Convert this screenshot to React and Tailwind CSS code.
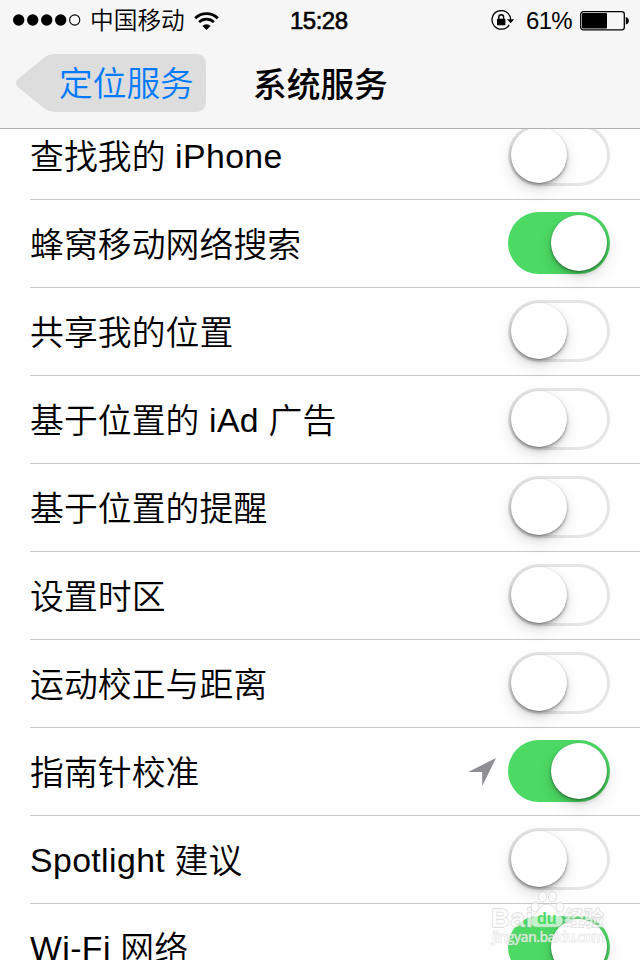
import React, { useState } from 'react';

const initialServices = [
    { id: 'find', label: '查找我的 iPhone', on: false },
    { id: 'cell', label: '蜂窝移动网络搜索', on: true },
    { id: 'share', label: '共享我的位置', on: false },
    { id: 'iad', label: '基于位置的 iAd 广告', on: false },
    { id: 'remind', label: '基于位置的提醒', on: false },
    { id: 'timezone', label: '设置时区', on: false },
    { id: 'motion', label: '运动校正与距离', on: false },
    { id: 'compass', label: '指南针校准', on: true, recent: true },
    { id: 'spotlight', label: 'Spotlight 建议', on: false },
    { id: 'wifi', label: 'Wi-Fi 网络', on: true },
];

const SignalDots = () => (
    <svg width="68" height="12" viewBox="0 0 68 12">
        <circle cx="5.7" cy="6" r="5.7" />
        <circle cx="19.7" cy="6" r="5.7" />
        <circle cx="33.7" cy="6" r="5.7" />
        <circle cx="47.7" cy="6" r="5.7" />
        <circle cx="61.7" cy="6" r="5.1" fill="none" stroke="#000" strokeWidth="1.1" />
    </svg>
);

const WifiIcon = () => (
    <svg width="25" height="18" viewBox="0 0 25 18">
        <path d="M1.2 6.2 A16 16 0 0 1 23.8 6.2" fill="none" stroke="#000" strokeWidth="2.8" />
        <path d="M5.1 10.2 A10.5 10.5 0 0 1 19.9 10.2" fill="none" stroke="#000" strokeWidth="2.6" />
        <path d="M12.5 18 L8.4 13.9 A5.8 5.8 0 0 1 16.6 13.9 Z" />
    </svg>
);

const RotationLock = () => (
    <svg width="24" height="21" viewBox="0 0 24 21">
        <path d="M18.2 14.8 A9.3 9.3 0 1 1 19.6 9.4" fill="none" stroke="#000" strokeWidth="1.3" />
        <path d="M16 9.2 H23.2 L19.6 13.2 Z" />
        <rect x="6" y="8.8" width="8.4" height="6.4" rx="0.6" />
        <path d="M7.8 9 V7.2 A2.4 2.4 0 0 1 12.6 7.2 V9" fill="none" stroke="#000" strokeWidth="1.4" />
    </svg>
);

const Battery = () => (
    <svg width="50" height="20" viewBox="0 0 50 20">
        <rect x="0.7" y="0.7" width="43.6" height="18.2" rx="2.6" fill="none" stroke="#000" strokeWidth="1.3" />
        <rect x="2" y="2" width="25" height="15.6" rx="0.8" />
        <path d="M45.8 6 C49.9 7 49.9 12.6 45.8 13.6 Z" />
    </svg>
);

const Toggle = ({ on, onChange }) => (
    <button
        role="switch"
        aria-checked={on}
        onClick={onChange}
        className={`mb-px flex h-[62px] w-[102px] shrink-0 items-center rounded-full ${
            on ? 'justify-end bg-[#4cd964] pr-[3px]' : 'justify-start bg-white pl-[3px] shadow-[inset_0_0_0_3px_#e5e5e5]'
        }`}
    >
        <span className="h-[56px] w-[56px] rounded-full bg-white shadow-[0_1px_2px_rgba(0,0,0,0.32),0_3px_5px_rgba(0,0,0,0.22),0_7px_16px_rgba(0,0,0,0.12)]" />
    </button>
);

// latin words are set a little wider than the chinese text around them
const Label = ({ text }) => (
    <span className="flex-1 pt-[2px] text-[33.8px] font-[350] leading-[85px]">
        {text.split(/([A-Za-z-]+)/).filter(Boolean).map((part) =>
            /[A-Za-z]/.test(part) ? (
                <span key={part} className="tracking-[0.4px]">{part}</span>
            ) : (
                <span key={part} className="align-[-1px] tracking-[0.1px]">{part}</span>
            )
        )}
    </span>
);

const Watermark = () => (
    <svg className="pointer-events-none absolute left-[484px] top-[888px]" width="130" height="62" viewBox="0 0 130 62">
        <g fill="#fff" fillOpacity="0.65" stroke="#bdbdbd" strokeOpacity="0.45" strokeWidth="1">
            <ellipse cx="51" cy="19" rx="4" ry="5" />
            <ellipse cx="58.5" cy="8.7" rx="4" ry="5.2" />
            <ellipse cx="68.5" cy="8.7" rx="4" ry="5.2" />
            <ellipse cx="76" cy="19" rx="4" ry="5" />
            <path d="M63 16 C69 16 72 23 77 28 C81 33 78 39 72 39 H53 C47 39 45 33 49 28 C55 23 57 16 63 16 Z" />
        </g>
        <g
            className="font-['Liberation_Sans','Noto_Sans_CJK_SC',sans-serif]"
            fill="#fff"
            fillOpacity="0.7"
            stroke="#b5b5b5"
            strokeOpacity="0.45"
            strokeWidth="1.3"
            paintOrder="stroke"
        >
            <text x="7" y="39" fontSize="26" fontWeight="700" textLength="42">Bai</text>
            <text x="80" y="38" fontSize="20" fontWeight="700" textLength="40">经验</text>
            <text className="font-['Open_Sans',sans-serif]" x="8" y="54" fontSize="14" fontWeight="600" strokeWidth="0.9" textLength="113">jingyan.baidu.com</text>
        </g>
        <text className="font-['Liberation_Sans',sans-serif]" x="53" y="36" fontSize="16" fontWeight="700" fill="#4cd964">du</text>
    </svg>
);

const StatusBar = () => (
    <div className="flex h-10 items-center pl-[13px] pr-[10px]">
        <div className="flex w-[277px] items-center">
            <SignalDots />
            <span className="ml-[9px] pt-[2px] text-[23.7px] font-[350] leading-[38px]">中国移动</span>
            <span className="ml-[9px] pt-[2px]"><WifiIcon /></span>
        </div>
        <span className="pt-[2px] text-[24px] leading-[38px] tracking-[-0.5px] [-webkit-text-stroke:0.6px_#000]">15:28</span>
        <div className="ml-auto flex items-center">
            <RotationLock />
            <span className="ml-[11px] mr-[8px] w-[46px] whitespace-nowrap pt-[2px] text-[24px] leading-[38px] tracking-[-0.7px]">61%</span>
            <span className="pt-px"><Battery /></span>
        </div>
    </div>
);

const NavBar = () => (
    <div className="flex h-[88px] items-center pb-[2px] pl-4 text-[34px]">
        <button className="relative h-[58px] w-[190px] pl-[43px] text-left text-[#007aff]">
            <svg className="absolute left-0 top-0" width="190" height="58" viewBox="0 0 190 58">
                <path
                    d="M38 0 H179 Q190 0 190 11 V47 Q190 58 179 58 H38 Q33 58 29 55 L3 34 Q-3 29 3 24 L29 3 Q33 0 38 0 Z"
                    fill="#dddddd"
                />
            </svg>
            <span className="relative block pt-[2px] text-[33.7px] font-[350] leading-[56px]">定位服务</span>
        </button>
        <h1 className="ml-[47px] pt-[3px] text-[33.7px] font-medium leading-[58px]">系统服务</h1>
    </div>
);

const App = () => {
    const [services, setServices] = useState(initialServices);

    const toggleService = (id) => {
        setServices(services.map((s) => (s.id === id ? { ...s, on: !s.on } : s)));
    };

    return (
        <div className="relative flex h-[960px] w-[640px] flex-col overflow-hidden bg-[#fefefe] font-['Liberation_Sans','Noto_Sans_CJK_SC',sans-serif] text-black">
            <header className="h-[129px] shrink-0 border-b border-[#b2b2b2] bg-[#f6f6f6]">
                <StatusBar />
                <NavBar />
            </header>

            <main className="min-h-0 flex-1 overflow-hidden">
                {/* list is scrolled slightly under the header */}
                <ul className="-mt-[17px] pl-[30px]">
                    {services.map((s) => (
                        <li key={s.id} className="flex h-[88px] items-center border-b border-[#c8c7cc] pr-[30px]">
                            <Label text={s.label} />
                            {s.recent && (
                                <svg className="mr-[12px]" width="28" height="28" viewBox="0 0 28 28">
                                    <path d="M28 0 L14.2 28 V14 H0.2 Z" fill="#8e8e93" />
                                </svg>
                            )}
                            <Toggle on={s.on} onChange={() => toggleService(s.id)} />
                        </li>
                    ))}
                </ul>
            </main>

            <Watermark />
        </div>
    );
};

export default App;
